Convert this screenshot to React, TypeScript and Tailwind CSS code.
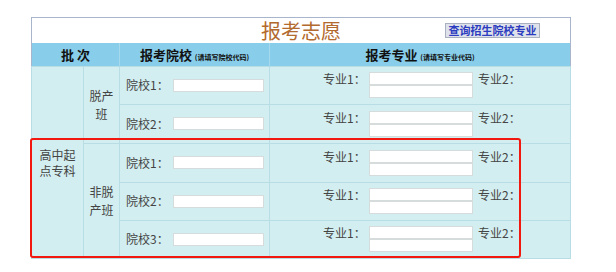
const font = { fontFamily: '"Noto Sans CJK SC", "Noto Sans", sans-serif' };

function Input({ w }: { w: string }) {
  return <div className={`${w} h-[13px] bg-white border border-[#d6dcdc]`} />;
}

function SchoolCell({ n }: { n: number }) {
  return (
    <td className="border border-[#b9dde4] pl-[6px]">
      <div className="flex items-center">
        <span className="w-[47px] text-[12px] leading-[14px] text-[#444]">院校{n}：</span>
        <Input w="w-[91px]" />
      </div>
    </td>
  );
}

function MajorCell() {
  return (
    <td className="border border-[#b9dde4] pl-[53px]">
      <div className="flex items-start">
        <span className="w-[46px] text-[12px] leading-[14px] text-[#444]">专业1：</span>
        <div className="flex flex-col">
          <Input w="w-[104px]" />
          <Input w="w-[104px]" />
        </div>
        <span className="ml-[5px] text-[12px] leading-[14px] text-[#444]">专业2：</span>
      </div>
    </td>
  );
}

export default function App() {
  return (
    <div className="w-[616px] h-[272px] bg-white" style={font}>
      <div className="pt-[17px] pl-[31px]">
        <div className="relative w-[539px]">
          <table className="w-[539px] border-collapse border border-[#a8b5cd] table-fixed">
            <colgroup>
              <col className="w-[52px]" />
              <col className="w-[36px]" />
              <col className="w-[150px]" />
              <col className="w-[301px]" />
            </colgroup>
            <tbody>
              {/* 标题 */}
              <tr className="h-[25px] bg-white">
                <td colSpan={4} className="p-0">
                  <div className="grid grid-cols-[1fr_auto_1fr] items-center">
                    <div />
                    <h1 className="text-[20px] leading-[24px] text-[#b26a2e] pt-[1px]">报考志愿</h1>
                    <div className="flex justify-end pr-[30px]">
                      <button className="h-[15px] w-[95px] bg-[#dfe2ea] border border-[#a9b0c0] text-[11px] leading-[13px] font-bold text-[#2b3cc0]">
                        查询招生院校专业
                      </button>
                    </div>
                  </div>
                </td>
              </tr>

              {/* 表头 */}
              <tr className="h-[23px] bg-[#88cdea] text-[13px] font-bold text-[#111]">
                <td colSpan={2} className="border-r border-[#a6d9ee] text-center">批 次</td>
                <td className="border-r border-[#a6d9ee] text-center">
                  报考院校 <span className="text-[7px]">(请填写院校代码)</span>
                </td>
                <td className="text-center">
                  报考专业 <span className="text-[7px]">(请填写专业代码)</span>
                </td>
              </tr>

              {/* 脱产班 */}
              <tr className="h-[38px] bg-[#d3eef0]">
                <td rowSpan={5} className="border border-[#b9dde4] text-center text-[12px] leading-[16px] text-[#444] px-[6px] pt-[2px]">
                  高中起点专科
                </td>
                <td rowSpan={2} className="border border-[#b9dde4] text-center text-[12px] leading-[18px] text-[#444] px-[4px]">
                  脱产班
                </td>
                <SchoolCell n={1} />
                <MajorCell />
              </tr>
              <tr className="h-[39px] bg-[#d3eef0]">
                <SchoolCell n={2} />
                <MajorCell />
              </tr>

              {/* 非脱产班 */}
              <tr className="h-[39px] bg-[#d3eef0]">
                <td rowSpan={3} className="border border-[#b9dde4] text-center text-[12px] leading-[18px] text-[#444] px-[4px]">
                  非脱产班
                </td>
                <SchoolCell n={1} />
                <MajorCell />
              </tr>
              <tr className="h-[38px] bg-[#d3eef0]">
                <SchoolCell n={2} />
                <MajorCell />
              </tr>
              <tr className="h-[38px] bg-[#d3eef0]">
                <SchoolCell n={3} />
                <MajorCell />
              </tr>
            </tbody>
          </table>

          {/* 红框标注 */}
          <div className="absolute left-[-1px] top-[121px] w-[491px] h-[120px] border-2 border-[#f2170f] rounded-[3px] pointer-events-none" />
        </div>
      </div>
    </div>
  );
}
